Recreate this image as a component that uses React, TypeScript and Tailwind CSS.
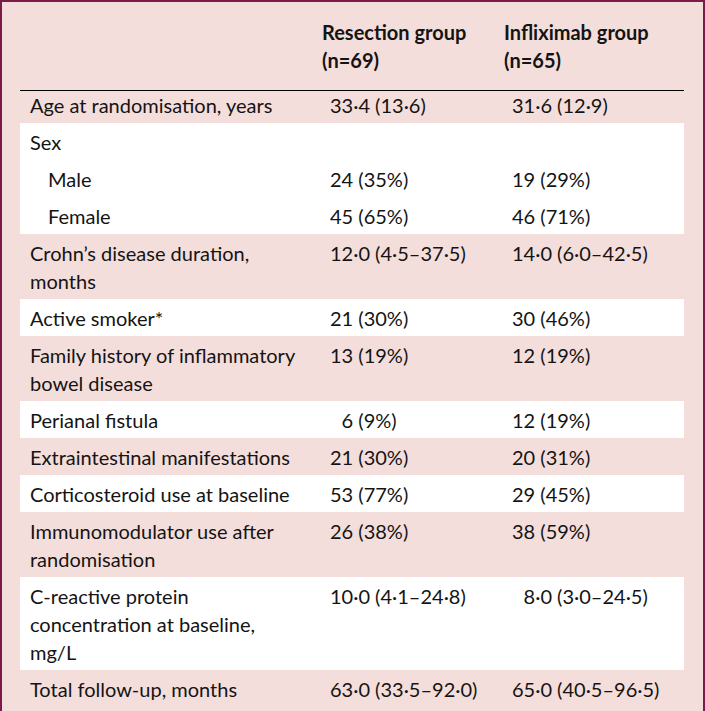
import React from "react";

type Row = {
  label: React.ReactNode;
  a: string;
  b: string;
  white?: boolean;
  indent?: boolean;
  first?: boolean;
};

const rows: Row[] = [
  { label: "Age at randomisation, years", a: "33·4 (13·6)", b: "31·6 (12·9)", first: true },
  { label: "Sex", a: "", b: "", white: true },
  { label: "Male", a: "24 (35%)", b: "19 (29%)", white: true, indent: true },
  { label: "Female", a: "45 (65%)", b: "46 (71%)", white: true, indent: true },
  { label: <>Crohn’s disease duration,<br />months</>, a: "12·0 (4·5–37·5)", b: "14·0 (6·0–42·5)" },
  { label: "Active smoker*", a: "21 (30%)", b: "30 (46%)", white: true },
  { label: <>Family history of inflammatory<br />bowel disease</>, a: "13 (19%)", b: "12 (19%)" },
  { label: "Perianal fistula", a: "\u20076 (9%)", b: "12 (19%)", white: true },
  { label: "Extraintestinal manifestations", a: "21 (30%)", b: "20 (31%)" },
  { label: "Corticosteroid use at baseline", a: "53 (77%)", b: "29 (45%)", white: true },
  { label: <>Immunomodulator use after<br />randomisation</>, a: "26 (38%)", b: "38 (59%)" },
  {
    label: <>C-reactive protein<br />concentration at baseline,<br />mg/L</>,
    a: "10·0 (4·1–24·8)",
    b: "\u20078·0 (3·0–24·5)",
    white: true,
  },
  { label: "Total follow-up, months", a: "63·0 (33·5–92·0)", b: "65·0 (40·5–96·5)" },
];

export default function App() {
  return (
    <div
      className="w-[705px] h-[711px] overflow-hidden border-l-2 border-r-2 border-t-2 border-[#7b1c48] bg-[#f4dedb] pl-[18px] pr-[19px] text-[20px] leading-[28px] text-[#141414]"
      style={{ fontFamily: "Lato, 'Liberation Sans', sans-serif" }}
    >
      {/* header */}
      <div className="grid grid-cols-[302px_182px_1fr] border-b border-black pt-[16px] pb-[16px] font-bold">
        <div />
        <div>
          Resection group
          <br />
          (n=69)
        </div>
        <div>
          Infliximab group
          <br />
          (n=65)
        </div>
      </div>

      {rows.map((r, i) => (
        <div
          key={i}
          className={`grid grid-cols-[302px_182px_1fr] ${
            r.first ? "pt-0 pb-[4px]" : "pt-[5px] pb-[4px]"
          } ${r.white ? "bg-white" : ""}`}
        >
          <div className={r.indent ? "pl-[28px]" : "pl-[10px]"}>{r.label}</div>
          <div className="pl-[8px] whitespace-pre">{r.a}</div>
          <div className="pl-[8px] whitespace-pre">{r.b}</div>
        </div>
      ))}
    </div>
  );
}
